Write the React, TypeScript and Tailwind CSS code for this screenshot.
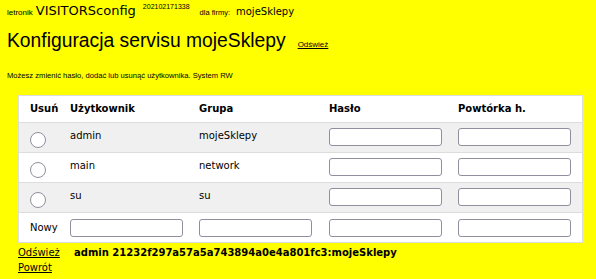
const arial = "font-['Liberation_Sans',Arial,sans-serif]";
const verdana = "font-['DejaVu_Sans',Verdana,sans-serif]";

type User = { login: string; group: string };

const users: User[] = [
  { login: "admin", group: "mojeSklepy" },
  { login: "main", group: "network" },
  { login: "su", group: "su" },
];

function Field() {
  return (
    <span className="block w-[113px] h-[18px] bg-white border border-[#8f8f9d] rounded-[3px]" />
  );
}

function Radio() {
  return (
    <span className="block w-[16px] h-[16px] rounded-full bg-white border border-[#8f8f9d]" />
  );
}

const cols = "grid grid-cols-[39px_129px_130px_129px_1fr]";

export default function App() {
  return (
    <div className={`min-h-[279px] bg-[#ffff00] text-black ${arial}`}>
      <div className="flex items-baseline pl-[7px] pt-[3px] h-[19px] leading-[16px]">
        <span className="text-[8px]">letronik</span>
        <span className={`ml-[3px] text-[13px] ${verdana}`}>VISITORSconfig</span>
        <span className="ml-[7px] text-[7px] relative -top-[6px]">202102171338</span>
        <span className="ml-[10px] text-[7.5px]">dla firmy:</span>
        <span className={`ml-[6px] text-[10px] ${verdana}`}>mojeSklepy</span>
      </div>

      <div className="flex items-baseline pl-[7px] mt-[10px] h-[24px] leading-[24px]">
        <h1 className="text-[19.3px]">Konfiguracja servisu mojeSklepy</h1>
        <a href="#" className="ml-[12px] text-[8px] leading-none underline">
          Odśwież
        </a>
      </div>

      <p className="pl-[7px] mt-[18px] text-[7.6px] leading-[10px]">
        Możesz zmienić hasło, dodać lub usunąć użytkownika. System RW
      </p>

      <div className={`ml-[18px] mt-[14px] w-[565px] bg-white border border-[#dddddd] text-[10px] leading-[12px] ${verdana}`}>
        <div className={`${cols} h-[27px] items-center font-bold border-b border-[#dddddd]`}>
          <span className="pl-[11px]">Usuń</span>
          <span className="pl-[12px]">Użytkownik</span>
          <span className="pl-[12px]">Grupa</span>
          <span className="pl-[12px]">Hasło</span>
          <span className="pl-[12px]">Powtórka h.</span>
        </div>

        {users.map((u, i) => (
          <div
            key={u.login}
            className={`${cols} h-[30px] items-start border-b border-[#dddddd] ${i % 2 === 0 ? "bg-[#f0f0f0]" : ""}`}
          >
            <span className="pl-[11px] pt-[9px]">
              <Radio />
            </span>
            <span className="pl-[12px] pt-[7px]">{u.login}</span>
            <span className="pl-[12px] pt-[7px]">{u.group}</span>
            <span className="pl-[12px] pt-[5px]">
              <Field />
            </span>
            <span className="pl-[12px] pt-[5px]">
              <Field />
            </span>
          </div>
        ))}

        <div className={`${cols} h-[29px] items-center`}>
          <span className="pl-[11px]">Nowy</span>
          <span className="pl-[12px]">
            <Field />
          </span>
          <span className="pl-[12px]">
            <Field />
          </span>
          <span className="pl-[12px]">
            <Field />
          </span>
          <span className="pl-[12px]">
            <Field />
          </span>
        </div>
      </div>

      <div className={`ml-[18px] mt-[2px] text-[10px] leading-[15px] ${verdana}`}>
        <div className="flex">
          <a href="#" className="w-[56px] underline">
            Odśwież
          </a>
          <span className="font-bold">admin 21232f297a57a5a743894a0e4a801fc3:mojeSklepy</span>
        </div>
        <a href="#" className="underline">
          Powrót
        </a>
      </div>
    </div>
  );
}
